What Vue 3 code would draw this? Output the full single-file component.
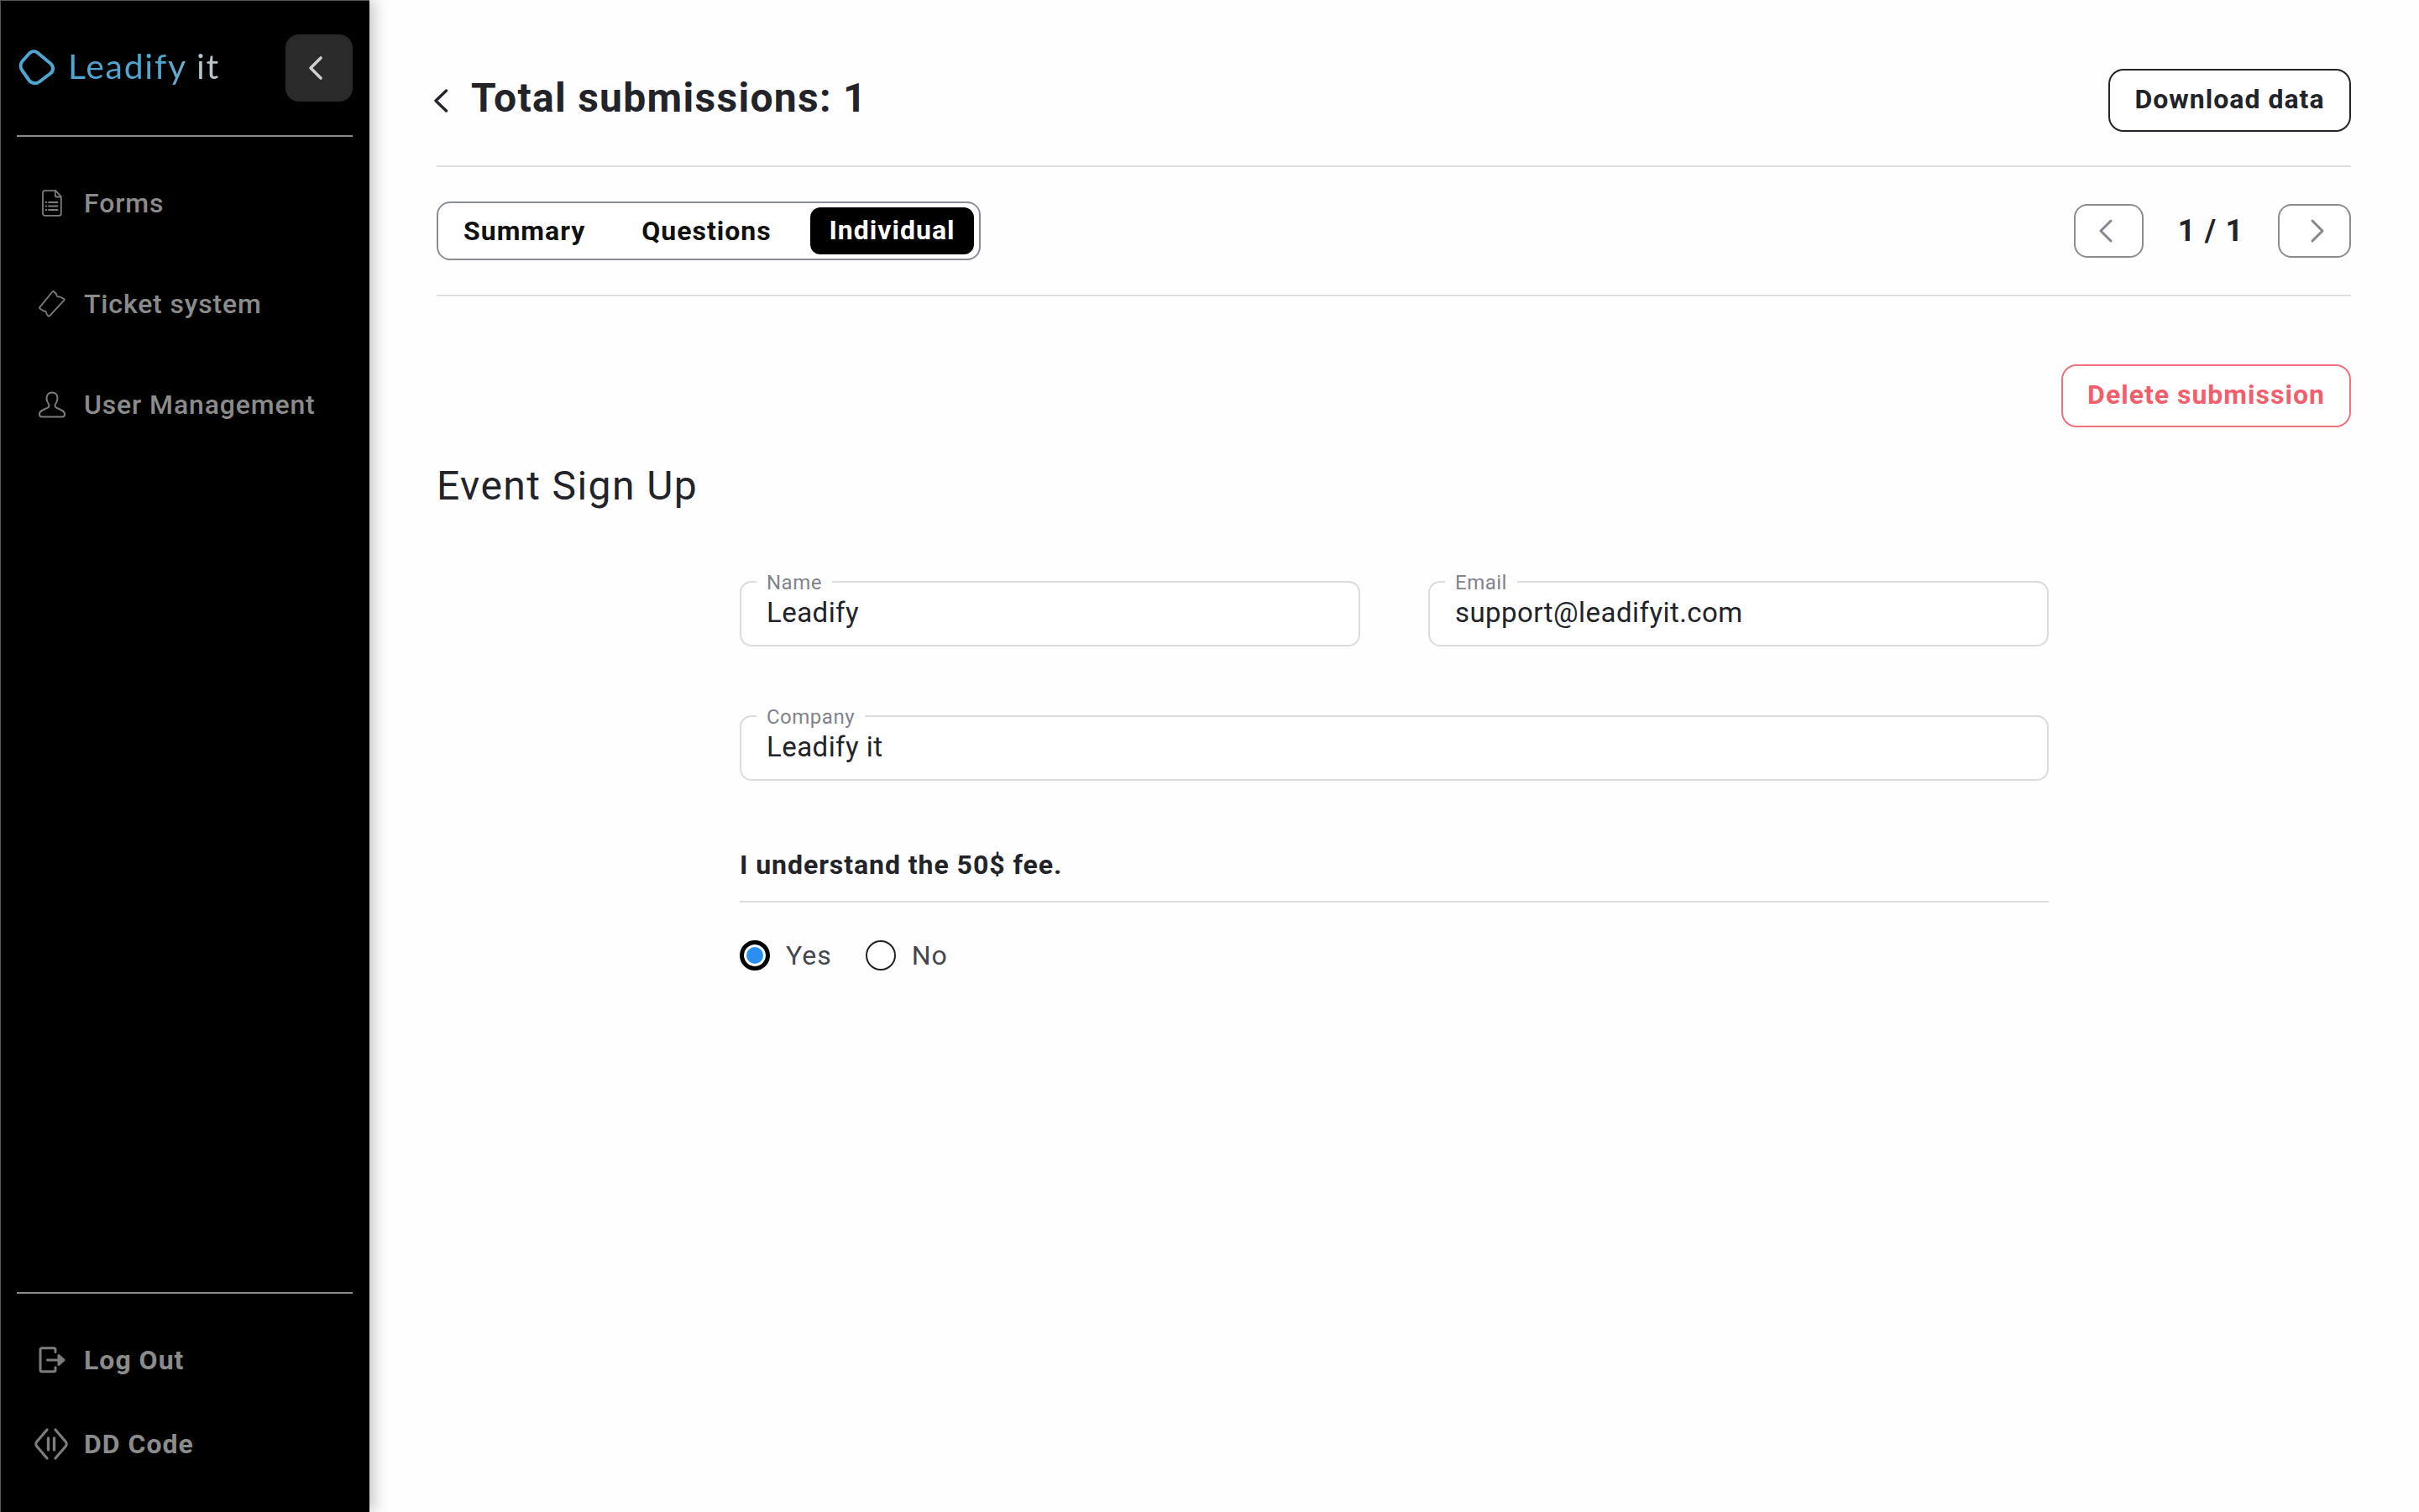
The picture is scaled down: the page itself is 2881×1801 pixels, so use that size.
<script setup>
const navItems = [
  { label: 'Forms', icon: 'doc' },
  { label: 'Ticket system', icon: 'ticket' },
  { label: 'User Management', icon: 'user' }
]
const footItems = [
  { label: 'Log Out', icon: 'logout' },
  { label: 'DD Code', icon: 'dd' }
]
const tabs = [
  { label: 'Summary', cls: 'tab-a' },
  { label: 'Questions', cls: 'tab-b' },
  { label: 'Individual', cls: 'tab-c active' }
]
</script>

<template>
  <div class="app">
    <aside class="sidebar">
      <div class="brand">
        <svg class="logo" viewBox="0 0 44 44" fill="none">
          <path d="M13 4.500C16 1.500 20 1.500 23 4L38 16.500C42 20 42 25.500 38 28.500L25.500 38C21 41.500 15.500 40.500 12.500 36.500L4.500 25C2 21.500 2 17 4.500 14Z" stroke="#4fa6cf" stroke-width="4" stroke-linejoin="round"/>
        </svg>
        <span class="wordmark">Leadify it</span>
        <button class="collapse">
          <svg viewBox="0 0 20 30" fill="none"><path d="M16 3 4 15l12 12" stroke="#cfcfcf" stroke-width="3.600" stroke-linecap="round" stroke-linejoin="round"/></svg>
        </button>
      </div>
      <nav class="nav">
        <a v-for="item in navItems" :key="item.label" class="nav-item">
          <span class="nav-icon">
            <svg v-if="item.icon === 'doc'" class="i-doc" viewBox="0 0 24 32" fill="none" stroke="#7c7c7c" stroke-width="1.800" stroke-linejoin="round" stroke-linecap="round">
              <path d="M3.500 1.200h12.800l6.500 7v20c0 1.400-1.200 2.600-2.600 2.600H3.500c-1.400 0-2.500-1.200-2.500-2.600V3.800c0-1.400 1.100-2.600 2.500-2.600z"/>
              <path d="M15.800 1.500v5c0 1.200.9 2 2 2h4.500"/>
              <path d="M8 15h10.500M8 19.500h10.500M8 24h10.500M4.500 15h.8M4.500 19.500h.8M4.500 24h.8"/>
            </svg>
            <svg v-else-if="item.icon === 'ticket'" class="i-wide" viewBox="0 0 32 32" fill="none" stroke="#7c7c7c" stroke-width="1.800" stroke-linejoin="round">
              <path d="M16.500 1.500c.5-.5 1.300-.5 1.800 0L21 4Q21 8 25 7.500L30.300 10c.5.4.5 1.100.1 1.600L13 30.300c-.5.5-1.200.5-1.700.1L9.500 28Q9.500 24 6 24.500L1.500 21.500c-.5-.5-.5-1.100-.1-1.600z"/>
            </svg>
            <svg v-else class="i-wide" viewBox="0 0 32 32" fill="none" stroke="#7c7c7c" stroke-width="2" stroke-linejoin="round">
              <path d="M16 1.500c-4 0-6.500 3-6.500 7 0 3 1 5 2.500 7 .8 1.100.6 3-.8 3.800L4 23c-2.100 1-3 2.500-3 4.500 0 2 1.200 3 3 3h24c1.800 0 3-1 3-3 0-2-.9-3.500-3-4.500l-7.200-3.700c-1.400-.8-1.600-2.700-.8-3.800 1.500-2 2.500-4 2.500-7 0-4-2.500-7-6.500-7z"/>
            </svg>
          </span>
          <span>{{ item.label }}</span>
        </a>
      </nav>
      <div class="foot">
        <a v-for="item in footItems" :key="item.label" class="foot-item">
          <span class="nav-icon">
            <svg v-if="item.icon === 'logout'" class="i-wide" viewBox="0 0 32 32" fill="none" stroke="#7c7c7c" stroke-width="3" stroke-linejoin="round" stroke-linecap="round">
              <path d="M20 6.500V3.800c0-1.200-.8-2-2-2H4c-1.200 0-2 .8-2 2v24c0 1.200.8 2 2 2h14c1.200 0 2-.8 2-2v-3"/>
              <path d="M10.500 16H25"/>
              <path d="M24 10.500l6 5.500-6 5.500z" fill="#7c7c7c"/>
            </svg>
            <svg v-else class="i-dd" viewBox="0 0 40 40" fill="none" stroke="#7c7c7c" stroke-width="3.200" stroke-linecap="round">
              <path d="M15 3 2.800 17.300c-1.300 1.500-1.300 3.900 0 5.400L15 37"/>
              <path d="M25 3l12.200 14.300c1.300 1.500 1.300 3.900 0 5.400L25 37"/>
              <path d="M16.500 13v14M23.500 13v14" stroke-width="3.400"/>
            </svg>
          </span>
          <span>{{ item.label }}</span>
        </a>
      </div>
    </aside>

    <main class="main">
      <header class="top">
        <div class="title-wrap">
          <svg class="back" viewBox="0 0 18 28" fill="none"><path d="M15.500 2 3 14l12.500 12" stroke="#22242a" stroke-width="3.400" stroke-linecap="round" stroke-linejoin="round"/></svg>
          <h1 class="title">Total submissions: 1</h1>
        </div>
        <button class="btn-download">Download data</button>
      </header>

      <section class="toolbar">
        <div class="tabs">
          <span v-for="tab in tabs" :key="tab.label" class="tab" :class="tab.cls">{{ tab.label }}</span>
        </div>
        <div class="pager">
          <button class="page-btn prev">
            <svg viewBox="0 0 20 30" fill="none"><path d="M16 3 4 15l12 12" stroke="#85878d" stroke-width="3" stroke-linecap="round" stroke-linejoin="round"/></svg>
          </button>
          <span class="page-num">1 / 1</span>
          <button class="page-btn next">
            <svg viewBox="0 0 20 30" fill="none"><path d="M4 3l12 12L4 27" stroke="#85878d" stroke-width="3" stroke-linecap="round" stroke-linejoin="round"/></svg>
          </button>
        </div>
      </section>

      <div class="actions">
        <button class="btn-delete">Delete submission</button>
      </div>

      <h2 class="form-title">Event Sign Up</h2>

      <form class="form">
        <div class="row two">
          <fieldset class="field"><legend>Name</legend><div class="value">Leadify</div></fieldset>
          <fieldset class="field"><legend>Email</legend><div class="value">support@leadifyit.com</div></fieldset>
        </div>
        <div class="row">
          <fieldset class="field"><legend>Company</legend><div class="value">Leadify it</div></fieldset>
        </div>
        <div class="question">I understand the 50$ fee.</div>
        <div class="radios">
          <label class="radio"><span class="dot on"></span><span>Yes</span></label>
          <label class="radio"><span class="dot"></span><span>No</span></label>
        </div>
      </form>
    </main>
  </div>
</template>

<style scoped>
.app {
  display: flex;
  width: 2881px;
  height: 1801px;
  background: #fefefe;
  overflow: hidden;
  font-family: Roboto, "Liberation Sans", sans-serif;
  color: #22242a;
}
.sidebar {
  width: 440px;
  height: 1801px;
  flex: none;
  box-sizing: border-box;
  background: #000;
  display: flex;
  flex-direction: column;
  box-shadow: 6px 0 16px rgba(0, 0, 0, 0.22);
  position: relative;
  z-index: 1;
  border-left: 1px solid #555;
  border-top: 1px solid #555;
}
.brand {
  height: 162px;
  margin: 0 20px 0 19px;
  box-sizing: border-box;
  border-bottom: 2px solid #8a8a8a;
  display: flex;
  align-items: flex-start;
  padding-top: 40px;
}
.logo {
  width: 44px;
  height: 44px;
  flex: none;
  margin-top: 18px;
  margin-left: 2px;
}
.wordmark {
  margin-left: 15px;
  margin-top: 14px;
  font-family: Lato, sans-serif;
  font-weight: 400;
  font-size: 41px;
  line-height: 48px;
  letter-spacing: 1.7px;
  width: 259px;
  white-space: nowrap;
  background: linear-gradient(90deg, #4fa6cf 0%, #4fa6cf 45%, #6fb0cc 53%, #b9c6cc 62%, #b9c6cc 100%);
  -webkit-background-clip: text;
  background-clip: text;
  color: transparent;
}
.collapse {
  width: 80px;
  height: 80px;
  flex: none;
  margin-left: auto;
  border: 0;
  border-radius: 16px;
  background: #2a2a2a;
  display: flex;
  align-items: center;
  justify-content: center;
  padding: 0 8px 0 0;
}
.collapse svg { width: 20px; height: 30px; }
.nav {
  flex: 1;
  padding-top: 19px;
}
.nav-item, .foot-item {
  display: flex;
  align-items: center;
  color: #8b8b8b;
  font-size: 32px;
  font-weight: 500;
  letter-spacing: 0.85px;
  white-space: nowrap;
}
.nav-item { height: 120px; }
.nav-icon {
  width: 99px;
  flex: none;
  display: flex;
  justify-content: center;
  padding-left: 23px;
  box-sizing: border-box;
}
.i-doc { width: 24px; height: 32px; }
.i-wide { width: 32px; height: 32px; }
.i-dd { width: 40px; height: 40px; margin-left: -2px; }
.foot {
  margin: 0 20px 0 19px;
  border-top: 2px solid #8a8a8a;
  padding: 29px 0 31px;
}
.foot-item {
  height: 100px;
  font-weight: 700;
  letter-spacing: 1px;
  margin-left: -19px;
}
.main {
  flex: 1;
  min-width: 0;
  box-sizing: border-box;
  padding: 82px 81px 0 80px;
}
.top {
  height: 117px;
  box-sizing: border-box;
  border-bottom: 2px solid #dedede;
  display: flex;
  align-items: flex-start;
  justify-content: space-between;
}
.title-wrap {
  display: flex;
  align-items: center;
  height: 70px;
}
.back {
  width: 18px;
  height: 28px;
  margin-left: -4px;
  margin-top: 6px;
}
.title {
  margin: 0 0 0 27px;
  font-size: 48px;
  font-weight: 700;
  letter-spacing: 1.3px;
  line-height: 70px;
  color: #22242a;
  white-space: nowrap;
}
button { font-family: inherit; }
.btn-download {
  width: 289px;
  height: 75px;
  box-sizing: border-box;
  border: 2px solid #22242a;
  border-radius: 18px;
  background: #fff;
  color: #22242a;
  font-size: 32px;
  font-weight: 700;
  letter-spacing: 1px;
  padding: 0 0 3px;
}
.toolbar {
  height: 154px;
  box-sizing: border-box;
  border-bottom: 2px solid #dedede;
  padding-top: 41px;
  display: flex;
  justify-content: space-between;
  align-items: flex-start;
}
.tabs {
  width: 648px;
  height: 70px;
  box-sizing: border-box;
  border: 2px solid #8a8d96;
  border-radius: 16px;
  background: #fff;
  display: flex;
  align-items: center;
  padding: 0 6px 0 30px;
}
.tab {
  font-size: 32px;
  font-weight: 700;
  letter-spacing: 1px;
  color: #111;
  white-space: nowrap;
}
.tab-b { margin-left: 67px; }
.tab.active {
  margin-left: auto;
  width: 195px;
  height: 56px;
  line-height: 54px;
  text-align: center;
  border-radius: 12px;
  background: #000;
  color: #fff;
}
.pager {
  display: flex;
  align-items: center;
  height: 64px;
  margin-top: 3px;
}
.page-btn {
  height: 64px;
  box-sizing: border-box;
  border: 2px solid #8d8d8d;
  border-radius: 16px;
  background: #fff;
  padding: 0;
  display: flex;
  align-items: center;
  justify-content: center;
}
.page-btn svg { width: 20px; height: 30px; }
.prev { width: 83px; padding-right: 8px; }
.next { width: 87px; padding-left: 6px; }
.page-num {
  width: 160px;
  text-align: center;
  font-size: 36px;
  font-weight: 700;
  letter-spacing: 1.2px;
  color: #22242a;
}
.actions {
  display: flex;
  justify-content: flex-end;
  padding-top: 81px;
}
.btn-delete {
  width: 345px;
  height: 75px;
  box-sizing: border-box;
  border: 2px solid #f0727c;
  border-radius: 18px;
  background: #fff;
  color: #f25f6c;
  font-size: 32px;
  font-weight: 700;
  letter-spacing: 1px;
  padding: 0 0 3px;
}
.form-title {
  margin: 40px 0 0;
  font-size: 48px;
  font-weight: 400;
  letter-spacing: 1.4px;
  line-height: 60px;
  color: #22242a;
}
.form {
  margin: 0 0 0 361px;
  width: 1559px;
  padding-top: 70px;
}
.row {
  display: flex;
  gap: 81px;
  margin-bottom: 69px;
}
.field {
  flex: 1;
  min-width: 0;
  height: 91px;
  box-sizing: border-box;
  margin: 0;
  border: 2px solid #dcdcdc;
  border-radius: 14px;
  padding: 0 30px;
  background: #fff;
}
.field legend {
  margin-left: -12px;
  padding: 2px 12px 0;
  font-size: 24px;
  line-height: 26px;
  letter-spacing: 0.5px;
  color: #80838c;
}
.value {
  font-size: 33px;
  line-height: 42px;
  letter-spacing: 0.45px;
  color: #22242a;
  margin-top: 2px;
}
.question {
  padding-top: 11px;
  height: 76px;
  box-sizing: border-box;
  border-bottom: 2px solid #dedede;
  font-size: 32px;
  font-weight: 700;
  letter-spacing: 0.95px;
  line-height: 40px;
  margin-bottom: 44px;
}
.radios {
  display: flex;
  align-items: center;
  gap: 40px;
}
.radio {
  display: flex;
  align-items: center;
  gap: 19px;
  font-size: 32px;
  letter-spacing: 1px;
  color: #44464c;
}
.dot {
  width: 36px;
  height: 36px;
  box-sizing: border-box;
  border: 2px solid #222;
  border-radius: 50%;
  background: #fff;
}
.dot.on {
  border: 5px solid #000;
  background: #2a8ff0;
  box-shadow: inset 0 0 0 3px #fff;
}
</style>

<style>
html, body { margin: 0; padding: 0; background: #fefefe; }
</style>
